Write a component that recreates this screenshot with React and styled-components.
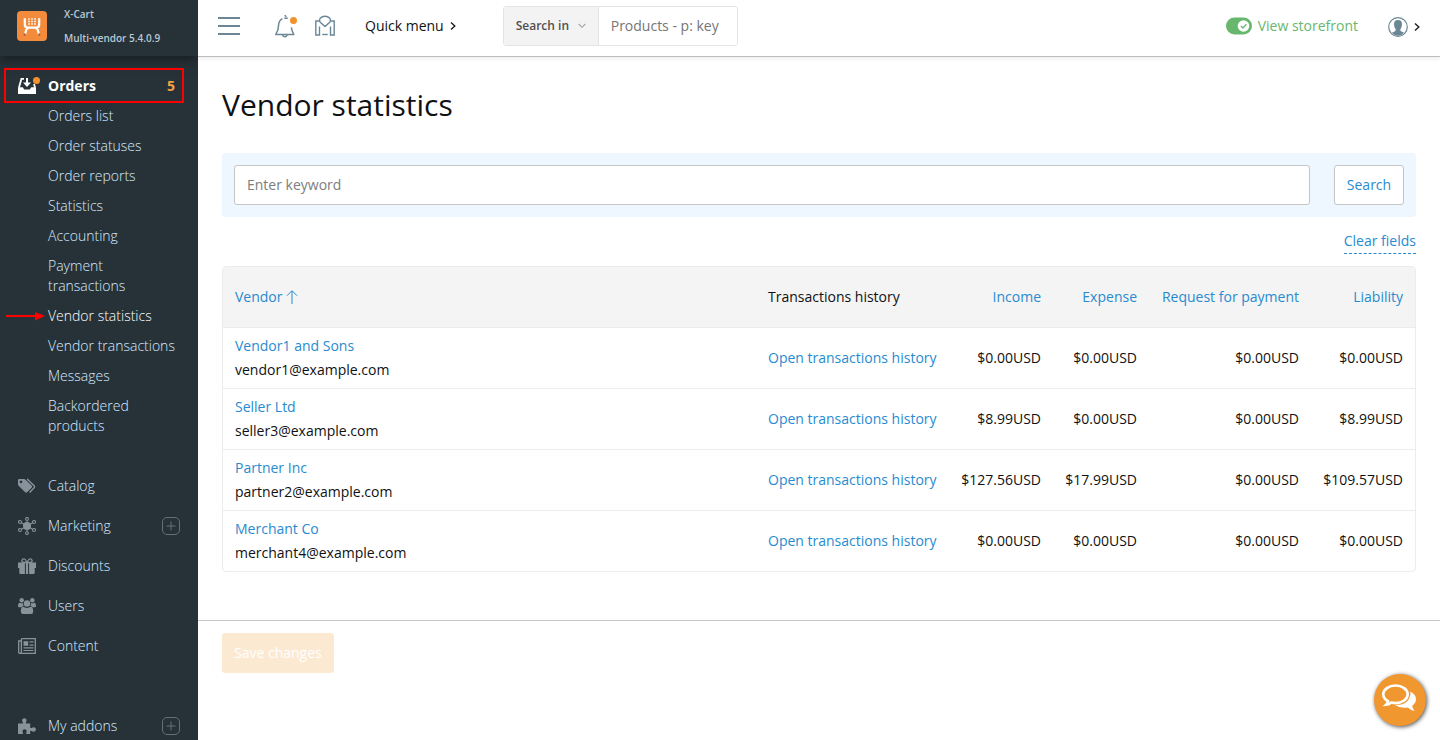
import React from 'react';
import styled, { createGlobalStyle, css } from 'styled-components';

const GlobalStyle = createGlobalStyle`
  *, *::before, *::after { box-sizing: border-box; }
  body {
    margin: 0;
    background: #fff;
    color: #0f1113;
    font: 400 14px/20px "Open Sans", "Noto Sans", sans-serif;
  }
  a { color: inherit; text-decoration: none; }
  ul { list-style: none; margin: 0; padding: 0; }
  button, input { font: inherit; }
  svg { display: block; flex: none; }
`;

const blue = '#288bd0';
const steel = '#6b8795';
const orange = '#f2922e';

/* ---------- shell ---------- */

const Shell = styled.div`
  display: grid;
  grid-template-columns: 198px minmax(0, 1fr);
  min-height: 100vh;
`;

const Sidebar = styled.aside`
  position: sticky;
  top: 0;
  height: 100vh;
  overflow: hidden;
  background: #263238;
  color: #d6eaff;
`;

const Main = styled.div`
  display: flex;
  flex-direction: column;
`;

/* ---------- sidebar ---------- */

const Brand = styled.a`
  display: flex;
  align-items: center;
  gap: 17px;
  height: 56px;
  padding: 0 17px 4px;
  box-shadow: 0 2px 12px rgba(0, 0, 0, 0.5);
`;

const BrandText = styled.span`
  font-size: 10px;
  font-weight: 600;
  line-height: 24px;
  color: #b9c8d3;
  white-space: nowrap;

  span { display: block; }
`;

const Nav = styled.nav`
  padding-top: 15px;
`;

const NavItem = styled.a`
  position: relative;
  display: flex;
  align-items: center;
  height: ${(p) => (p.$current ? 30 : 40)}px;
  padding: 0 18px;
  gap: 12px;
  font-weight: ${(p) => (p.$current ? 700 : 300)};
  color: ${(p) => (p.$current ? '#fff' : 'inherit')};

  & > svg { color: ${(p) => (p.$current ? '#fff' : '#87929a')}; }
  & > svg:last-child { color: #647078; }
`;

const NavLabel = styled.span`
  flex: 1;
`;

const Count = styled.span`
  padding-right: 5px;
  font-weight: 700;
  color: #f5a045;
`;

const Frame = styled.span`
  position: absolute;
  inset: -3px 14px -2px 4px;
  border: 2px solid #f00;
`;

const SubMenu = styled.ul`
  padding-bottom: 25px;
`;

const SubLink = styled.a`
  position: relative;
  display: block;
  padding: 5px 20px 5px 48px;
  font-weight: 300;
  color: ${(p) => (p.$active ? '#fff' : 'inherit')};

  svg { position: absolute; left: 6px; top: 10px; }
`;

const NavGroup = styled.div`
  padding-bottom: ${(p) => p.$gap || 0}px;
`;

/* ---------- top bar ---------- */

const TopBar = styled.header`
  display: flex;
  align-items: center;
  height: 57px;
  padding: 0 20px 4px;
  border-bottom: 1px solid #bdbdbd;
  box-shadow: 0 2px 4px rgba(0, 0, 0, 0.07);
`;

const IconButton = styled.button`
  display: flex;
  padding: 0;
  border: 0;
  background: none;
  color: ${steel};
  margin-right: ${(p) => p.$after || 0}px;
`;

const QuickMenu = styled.button`
  display: flex;
  align-items: center;
  gap: 6px;
  margin-right: 47px;
  padding: 0;
  border: 0;
  background: none;
  color: #0f1113;
`;

const SearchIn = styled.div`
  display: flex;
  width: 235px;
  height: 40px;
  border: 1px solid #e4e4e4;
  border-radius: 3px;
  overflow: hidden;
`;

const Scope = styled.button`
  display: flex;
  align-items: center;
  justify-content: space-between;
  flex: 0 0 95px;
  padding: 0 12px;
  border: 0;
  border-right: 1px solid #e4e4e4;
  background: #f3f3f3;
  font-size: 12px;
  font-weight: 600;
  color: #505050;
`;

const ScopeInput = styled.input`
  flex: 1;
  min-width: 0;
  padding: 0 12px;
  border: 0;
  outline: 0;
  background: #fff;

  &::placeholder { color: #757575; opacity: 1; }
`;

const TopRight = styled.div`
  display: flex;
  align-items: center;
  margin-left: auto;
`;

const Storefront = styled.a`
  display: flex;
  align-items: center;
  gap: 6px;
  margin-right: 30px;
  color: #67b86d;
`;

const Account = styled.button`
  display: flex;
  align-items: center;
  gap: 6px;
  padding: 2px 0 0;
  border: 0;
  background: none;
  color: ${steel};
`;

/* ---------- content ---------- */

const Content = styled.main`
  padding: 24px 24px 48px;
`;

const Title = styled.h1`
  margin: 0 0 24px;
  font-size: 30px;
  font-weight: 400;
  line-height: 48px;
`;

const Filter = styled.form`
  display: flex;
  gap: 24px;
  padding: 12px;
  border-radius: 4px;
  background: #eef6ff;
`;

const Keyword = styled.input`
  flex: 1;
  min-width: 0;
  height: 40px;
  padding: 0 12px 2px;
  border: 1px solid #c5c5c5;
  border-radius: 3px;
  background: #fff;

  &::placeholder { color: #7d7d7d; opacity: 1; }
`;

const SearchButton = styled.button`
  width: 70px;
  padding: 0;
  border: 1px solid #c5c5c5;
  border-radius: 3px;
  background: #fff;
  color: ${blue};
`;

const ClearRow = styled.div`
  display: flex;
  justify-content: flex-end;
  padding: 14px 0 12px;
`;

const ClearLink = styled.a`
  padding-bottom: 2px;
  border-bottom: 1px dashed ${blue};
  color: ${blue};
`;

const TableFrame = styled.div`
  border: 1px solid #ececec;
  border-radius: 4px;
  overflow: hidden;
`;

const Table = styled.table`
  width: 100%;
  border-collapse: separate;
  border-spacing: 0;
`;

const cell = css`
  padding: 0 12px;
  white-space: nowrap;
  text-align: ${(p) => (p.$right ? 'right' : 'left')};
`;

const Th = styled.th`
  ${cell}
  height: 60px;
  width: ${(p) => (p.$wide ? '100%' : 'auto')};
  min-width: ${(p) => p.$min || 0}px;
  background: #f4f4f4;
  font-weight: 400;
`;

const Td = styled.td`
  ${cell}
  height: 61px;
  border-top: 1px solid #ececec;
`;

const Link = styled.a`
  color: ${blue};
`;

const SortLink = styled(Link)`
  display: inline-flex;
  align-items: center;
  gap: 3px;
`;

const Vendor = styled.div`
  line-height: 24px;
  & > * { display: block; }
`;

const Footer = styled.footer`
  padding: 12px 24px;
  border-top: 1px solid #c6c6c6;
`;

const SaveButton = styled.button`
  height: 40px;
  padding: 0 12px;
  border: 0;
  border-radius: 3px;
  background: #fce9d2;
  color: #fff;
`;

const ChatButton = styled.button`
  position: fixed;
  right: 14px;
  bottom: 14px;
  display: flex;
  align-items: center;
  justify-content: center;
  width: 52px;
  height: 52px;
  padding: 0 2px 4px 0;
  border: 0;
  border-radius: 50%;
  background: #f1972f;
  color: #fff;
  box-shadow: 1px 1px 4px rgba(0, 0, 0, 0.7);
`;

/* ---------- icons ---------- */

const Svg = ({ w = 18, h = w, children }) => (
  <svg width={w} height={h} viewBox={`0 0 ${w} ${h}`} fill="none" aria-hidden="true">
    {children}
  </svg>
);

const LogoIcon = () => (
  <Svg w={30}>
    <rect width="30" height="30" rx="4" fill="#f28c3c" />
    <path d="M7.800 7.200v6.300q0 3.200 3.200 3.200h8q3.200 0 3.200-3.200V7.200" stroke="#fff" strokeWidth="2.200" />
    <path d="M11.500 16.800Q8.500 18.300 8.300 23.400M18.500 16.800q3 1.500 3.200 6.600" stroke="#fff" strokeWidth="2.100" />
    <path d="M6.800 23.500h1.800M21.400 23.500h1.800" stroke="#b14a22" strokeWidth="1.800" />
    <path d="M11.200 7.900h7.800M11.200 10.400h7.800M11.200 12.900h7.800" stroke="#fff" strokeWidth="1.500" strokeDasharray="1.600 1.400" />
  </Svg>
);

const OrdersIconBox = styled.span`
  width: 18px;
`;

const OrdersIcon = () => (
  <OrdersIconBox>
    <Svg w={22} h={18}>
      <path d="M0 10.200h4.800l1.400 2.400h5.600l1.400-2.400H18V17H0z" fill="currentColor" />
      <path d="M1 10.500 3.400 1.900H6M17 10.500l-1-3.600" stroke="currentColor" strokeWidth="1.800" />
      <path d="M8 1h2v4.600h3L9 9.900 5 5.600h3z" fill="currentColor" />
      <circle cx="18.500" cy="3.600" r="3.500" fill={orange} />
    </Svg>
  </OrdersIconBox>
);

const TagsIcon = () => (
  <Svg>
    <path fill="currentColor" fillRule="evenodd" d="M0 3.200Q0 2 1.200 2h4.600q1 0 1.800.8l6.200 6q.9.9 0 1.800l-4.700 4.600q-.9.9-1.800 0L.8 9Q0 8.200 0 7.200zM3 3.600a1.300 1.300 0 1 0 .01 0z" />
    <path d="M9 2.300q.6.1 1.200.7l6.100 5.900q.7.800 0 1.600l-4.700 4.900" stroke="currentColor" strokeWidth="1.400" />
  </Svg>
);

const MarketingIcon = () => (
  <Svg>
    <circle cx="9" cy="9" r="4" fill="currentColor" />
    <g stroke="currentColor" strokeWidth="1.100">
      <path d="M9 3.300v11.400M3.400 5.700l11.200 6.600M3.400 12.300l11.200-6.600" />
      <circle cx="9" cy="1.900" r="1.400" />
      <circle cx="9" cy="16.100" r="1.400" />
      <circle cx="2" cy="5" r="1.500" />
      <circle cx="16" cy="5" r="1.500" />
      <circle cx="2" cy="13" r="1.500" />
      <circle cx="16" cy="13" r="1.500" />
    </g>
  </Svg>
);

const GiftIcon = () => (
  <Svg>
    <path fill="currentColor" d="M0 5.600h6.900V11H0zM11.100 5.600H18V11h-6.900zM1.300 10.900h5.600V17H2.600q-1.300 0-1.300-1.300zM11.100 10.900h5.600v4.800q0 1.300-1.300 1.300h-4.300zM7.900 6h2.200v11H7.900z" />
    <path d="M8.700 5.500H5.600Q3.700 5.200 3.900 3.400 4.500 1.400 6.600 2 8 2.700 8.700 5.500zM9.300 5.500h3.100q1.900-.3 1.700-2.100-.6-2-2.700-1.400Q10 2.700 9.300 5.500z" stroke="currentColor" strokeWidth="1.300" />
  </Svg>
);

const UsersIcon = () => (
  <Svg>
    <g fill="currentColor">
      <circle cx="3.700" cy="3.200" r="2.200" />
      <circle cx="14.300" cy="3.200" r="2.200" />
      <path d="M0 9.500q0-3.800 1.700-3.800l2 .7 1.500-.5q-.6 1.500.5 3.200-1.300.1-2.200 1.100H1.300Q0 10.100 0 9.500zM18 9.500q0-3.800-1.700-3.800l-2 .7-1.500-.5q.6 1.500-.5 3.200 1.300.1 2.200 1.100h2.200Q18 10.100 18 9.500z" />
      <circle cx="9" cy="6.500" r="3.200" />
      <path d="M5.200 9.800q1.600 1.100 3.800 1.100t3.800-1.100q2.400.2 2.400 4.700 0 2.500-2.200 2.500H5q-2.200 0-2.200-2.500 0-4.500 2.400-4.700z" />
    </g>
  </Svg>
);

const ContentIcon = () => (
  <Svg>
    <path d="M3.400 1.700h13.900v14.600H2q-1.300 0-1.300-1.400V4h2.700v10.800q0 1.400-1.200 1.500M3.400 1.700V4" stroke="currentColor" strokeWidth="1.300" />
    <path d="M5.500 4.200h4.700v4.600H5.500z" fill="currentColor" />
    <path d="M11.500 4.900h4M11.500 8.100h4M5.500 10.900h10M5.500 13.500h10" stroke="currentColor" strokeWidth="1.200" />
  </Svg>
);

const PuzzleIcon = () => (
  <Svg>
    <path fill="currentColor" d="M0 6.600h4.800q.4-.5-.1-1.400Q3.500 3 4.700 1.800q1.600-1.300 3.200 0 1.200 1.200.1 3.400-.4.900 0 1.400h4.200v4.200q.6.500 1.400.1 2-1.300 3.600-.2 1.400 1.700 0 3.400-1.600 1.200-3.600-.1-.8-.4-1.400.1V17H8.400q-.5-.6-.1-1.300.9-2-.2-3-1.500-1-3 0-1.100 1-.2 3 .4.700-.1 1.300H0z" />
  </Svg>
);

const PlusBox = () => (
  <Svg>
    <rect x=".5" y=".5" width="17" height="17" rx="4.500" stroke="currentColor" />
    <path d="M9 4.500v9M4.500 9h9" stroke="currentColor" />
  </Svg>
);

const Pointer = () => (
  <Svg w={39} h={10}>
    <path d="M0 5h30" stroke="#f00" strokeWidth="2" />
    <path d="M29 1v8.500L39 5z" fill="#f00" />
  </Svg>
);

const MenuIcon = () => (
  <Svg w={22} h={20}>
    <path d="M0 2h22M0 10h22M0 18h22" stroke="currentColor" strokeWidth="1.800" />
  </Svg>
);

const BellIcon = () => (
  <Svg w={22} h={24}>
    <g stroke="currentColor" strokeWidth="1.500" strokeLinejoin="round">
      <path d="M7.400 4.700Q3.900 6.500 3.600 11 3.500 16.500.8 20.400H18.800Q17 17.500 16.300 13.400" />
      <path d="M9.300 4.300h3.500M9.700 1.200l1.700 1.600" />
      <path d="M7.500 20.600Q8 22.700 9.900 22.700t2.400-2.100" />
    </g>
    <circle cx="18.500" cy="6.500" r="3.500" fill={orange} />
  </Svg>
);

const MapIcon = () => (
  <Svg w={20} h={22}>
    <g stroke="currentColor" strokeWidth="1.400">
      <path d="M4.600 6H.8v14h3.700v-8.500M15.400 6h3.800v14h-3.700v-8.500" />
      <path d="M10 11.500 5 7Q3.900 5.200 5.200 3.200 7 1.200 10 1.200t4.800 2q1.300 2 .2 3.800z" />
      <path d="M7.300 19.500h5.400" />
    </g>
  </Svg>
);

const ChevronRight = () => (
  <Svg w={6} h={10}>
    <path d="m1 1.500 3.800 3.500L1 8.500" stroke="#1c1f21" strokeWidth="1.400" />
  </Svg>
);

const ChevronDown = () => (
  <Svg w={8} h={6}>
    <path d="m.7 1 3.300 3.300L7.300 1" stroke="#a4a4a8" strokeWidth="1.100" />
  </Svg>
);

const ToggleIcon = () => (
  <Svg w={26} h={18}>
    <rect y=".5" width="26" height="17" rx="8.500" fill="#67b86d" />
    <circle cx="17.500" cy="9" r="5.800" fill="#fff" />
    <path d="m14.900 9 2 2 3.500-3.700" stroke="#67b86d" strokeWidth="1.300" />
  </Svg>
);

const UserIcon = () => (
  <Svg w={20}>
    <circle cx="10" cy="10" r="9.300" stroke="currentColor" strokeWidth="1.200" />
    <path fill="currentColor" d="M10 3.100q4.100 0 4 4.300-.2 3.400-1.700 5v1.200q.4 1 3.800 2.200-2.300 2.900-6.100 2.900T3.900 15.800Q7.300 14.600 7.700 13.600v-1.200q-1.500-1.600-1.700-5Q5.900 3.100 10 3.100z" />
  </Svg>
);

const SortUp = () => (
  <Svg w={12} h={16}>
    <path d="M6 15V2M1 6.700 6 1.700l5 5" stroke="currentColor" strokeWidth="1" />
  </Svg>
);

const ChatIcon = () => (
  <Svg w={36} h={30}>
    <path d="M14.500 2.500C7.800 2.500 2.300 6.500 2.300 11.300c0 2.900 1.800 5.300 4.700 6.900q-.4 1.900-1.900 3.400 3.200-.3 5.200-2.100 2 .5 4.200.5c6.700 0 12.200-3.900 12.200-8.700S21.200 2.500 14.500 2.500z" stroke="currentColor" strokeWidth="2.600" />
    <path d="M29.500 8.500q5.500 3.300 5.500 7.700 0 3.700-3.800 6.500.3 2.800 2.300 5.300-4.100-.8-6.600-3.500-7.900 1.200-13.400-2.700 8.900.6 13.200-4.100 3.200-3.900 2.800-9.200z" fill="currentColor" />
  </Svg>
);

/* ---------- data ---------- */

const orderLinks = [
  'Orders list', 'Order statuses', 'Order reports', 'Statistics', 'Accounting',
  'Payment transactions', 'Vendor statistics', 'Vendor transactions', 'Messages',
  'Backordered products',
];

const sections = [
  { label: 'Catalog', icon: TagsIcon },
  { label: 'Marketing', icon: MarketingIcon, plus: true },
  { label: 'Discounts', icon: GiftIcon },
  { label: 'Users', icon: UsersIcon },
  { label: 'Content', icon: ContentIcon },
];

const amountColumns = [
  { label: 'Income', min: 104 },
  { label: 'Expense', min: 96 },
  { label: 'Request for payment', min: 162 },
  { label: 'Liability', min: 104 },
];

const vendors = [
  { name: 'Vendor1 and Sons', email: 'vendor1@example.com', amounts: ['0.00', '0.00', '0.00', '0.00'] },
  { name: 'Seller Ltd', email: 'seller3@example.com', amounts: ['8.99', '0.00', '0.00', '8.99'] },
  { name: 'Partner Inc', email: 'partner2@example.com', amounts: ['127.56', '17.99', '0.00', '109.57'] },
  { name: 'Merchant Co', email: 'merchant4@example.com', amounts: ['0.00', '0.00', '0.00', '0.00'] },
];

const Section = ({ label, icon: Icon, plus }) => (
  <NavItem href="#">
    <Icon />
    <NavLabel>{label}</NavLabel>
    {plus && <PlusBox />}
  </NavItem>
);

export default function App() {
  return (
    <>
      <GlobalStyle />
      <Shell>
        <Sidebar>
          <Brand href="#">
            <LogoIcon />
            <BrandText>
              <span>X-Cart</span>
              <span>Multi-vendor 5.4.0.9</span>
            </BrandText>
          </Brand>
          <Nav>
            <NavItem href="#" $current>
              <OrdersIcon />
              <NavLabel>Orders</NavLabel>
              <Count>5</Count>
              <Frame />
            </NavItem>
            <SubMenu>
              {orderLinks.map((label) => {
                const active = label === 'Vendor statistics';
                return (
                  <li key={label}>
                    <SubLink href="#" $active={active}>
                      {active && <Pointer />}
                      {label}
                    </SubLink>
                  </li>
                );
              })}
            </SubMenu>
            <NavGroup $gap={40}>
              {sections.map((s) => <Section key={s.label} {...s} />)}
            </NavGroup>
            <NavGroup>
              <Section label="My addons" icon={PuzzleIcon} plus />
            </NavGroup>
          </Nav>
        </Sidebar>

        <Main>
          <TopBar>
            <IconButton type="button" aria-label="Toggle menu" $after={35}><MenuIcon /></IconButton>
            <IconButton type="button" aria-label="Notifications" $after={18}><BellIcon /></IconButton>
            <IconButton type="button" aria-label="Marketplace" $after={30}><MapIcon /></IconButton>
            <QuickMenu type="button">Quick menu <ChevronRight /></QuickMenu>
            <SearchIn>
              <Scope type="button">Search in <ChevronDown /></Scope>
              <ScopeInput type="text" aria-label="Search products" placeholder="Products - p: key" />
            </SearchIn>
            <TopRight>
              <Storefront href="#"><ToggleIcon />View storefront</Storefront>
              <Account type="button" aria-label="Account"><UserIcon /><ChevronRight /></Account>
            </TopRight>
          </TopBar>

          <Content>
            <Title>Vendor statistics</Title>
            <Filter onSubmit={(e) => e.preventDefault()}>
              <Keyword type="text" aria-label="Keyword" placeholder="Enter keyword" />
              <SearchButton type="submit">Search</SearchButton>
            </Filter>
            <ClearRow><ClearLink href="#">Clear fields</ClearLink></ClearRow>
            <TableFrame>
              <Table>
                <thead>
                  <tr>
                    <Th $wide><SortLink href="#">Vendor <SortUp /></SortLink></Th>
                    <Th $min={193}>Transactions history</Th>
                    {amountColumns.map(({ label, min }) => (
                      <Th key={label} $right $min={min}><Link href="#">{label}</Link></Th>
                    ))}
                  </tr>
                </thead>
                <tbody>
                  {vendors.map((v) => (
                    <tr key={v.name}>
                      <Td>
                        <Vendor><Link href="#">{v.name}</Link><span>{v.email}</span></Vendor>
                      </Td>
                      <Td><Link href="#">Open transactions history</Link></Td>
                      {v.amounts.map((a, i) => (
                        <Td key={amountColumns[i].label} $right>{`$${a}USD`}</Td>
                      ))}
                    </tr>
                  ))}
                </tbody>
              </Table>
            </TableFrame>
          </Content>

          <Footer><SaveButton type="button" disabled>Save changes</SaveButton></Footer>
        </Main>
      </Shell>
      <ChatButton type="button" aria-label="Chat"><ChatIcon /></ChatButton>
    </>
  );
}
